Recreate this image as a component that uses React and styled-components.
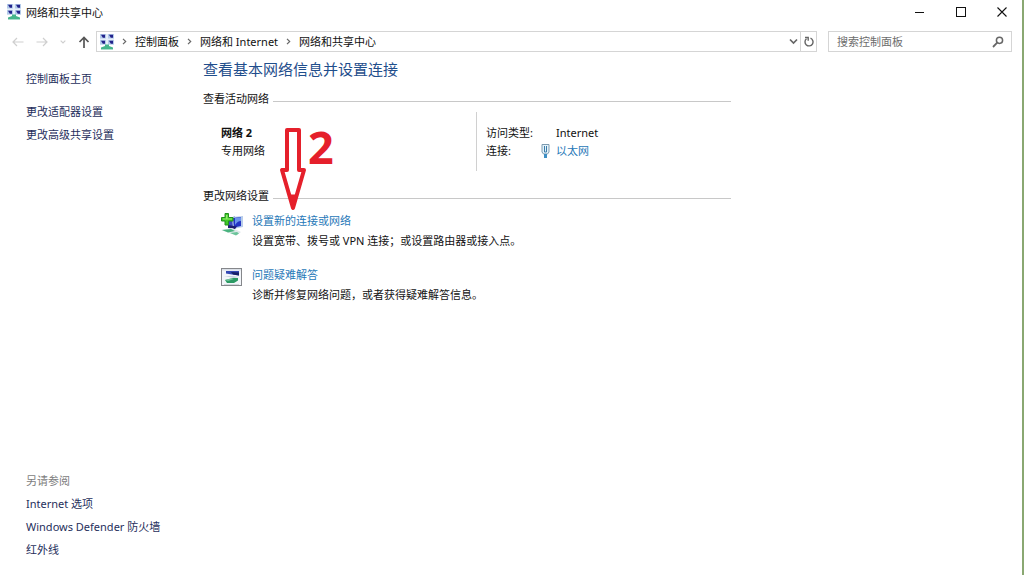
import React, { useState } from 'react'
import styled, { createGlobalStyle } from 'styled-components'

const GlobalStyle = createGlobalStyle`
* {
    box-sizing: border-box;
}
body {
    margin: 0;
    background: #fff;
    color: #111;
    font-family: "Noto Sans", "Noto Sans CJK SC", sans-serif;
    font-size: 11px;
}
button, input {
    font: inherit;
    color: inherit;
}
`

const NetworkIcon = () => (
    <svg width="14" height="16" viewBox="0 0 14 16" aria-hidden="true">
        <rect width="14" height="11" fill="#e6effa" />
        <path d="M0 0h6v4.600H0zM8 0h6v4.600H8zM0 6h6v4.600H0zM8 6h6v4.600H8z" fill="#b4cbea" />
        <path d="M1 .8h4v3H2.800zM9 .8h4v3h-2.200zM1 6.800h4v3H2.800zM9 6.800h4v3h-2.200z" fill="#22228a" />
        <path d="M5 10.500h4V12l4 1.500V15H1v-1.500L5 12z" fill="#45b58c" />
        <path d="M1 15h12v1H1z" fill="#a8dccb" />
    </svg>
)

const SetupIcon = () => (
    <svg width="22" height="23" viewBox="0 0 22 23" aria-hidden="true">
        <path d="M7 5l7-1.500v11L7 15z" fill="#3b4cc0" />
        <path d="M11 4l11-1v11l-10 2z" fill="#b9cdea" />
        <path d="M12 5l8-1v9l-7 1.500z" fill="#2233c4" />
        <path d="M14 5l6-.8V8c-3 0-4 1.500-6 4z" fill="#6d95ea" />
        <path d="M7 12l9 1.500-2 2.500-7-1z" fill="#1d1d70" />
        <path d="M0 17l11-2 9 4-4 3-8-2z" fill="#dfe8ea" />
        <path d="M1 17l9-1 4 2-7 1.500z" fill="#49b37e" />
        <path d="M9 20l7-1 2 1.500-3 2z" fill="#6cc49a" />
        <path d="M4 .5h3.500v4H12V8H7.500v4H4V8H.5V4.500H4z" fill="#3fc928" stroke="#23901d" />
        <path d="M5 2h1.500v3.500H11v1H2v-1h3z" fill="#91ed68" />
    </svg>
)

const TroubleshootIcon = () => (
    <svg width="22" height="20" viewBox="0 0 22 20" aria-hidden="true">
        <rect x=".5" y="1.500" width="20" height="17" fill="#f3f6fa" stroke="#85878b" />
        <path d="M1 2h19v1.500H1z" fill="#dce1e8" />
        <path d="M5 4h13v4.500l-7-1-6-1z" fill="#3348b4" />
        <path d="M10 5l8 .5v3l-6-1z" fill="#171f66" />
        <path d="M3 9h9l6 1-5 1z" fill="#c8d2de" />
        <path d="M4 13l8-2h5v2.500L13 16H6z" fill="#2b9a64" />
        <path d="M4 13l6-1.500 3 .5-6 2z" fill="#72c59b" />
        <path d="M3 17h15v1H3z" fill="#cfd6dc" />
    </svg>
)

const EthernetIcon = () => (
    <svg width="9" height="14" viewBox="0 0 9 14" fill="none" aria-hidden="true">
        <path d="M1 .5h7V8L6.500 10h-4L1 8z" fill="#e4f2fa" stroke="#7c9bb0" />
        <path d="M3.500 2v6h2V2" stroke="#3d7ea9" />
        <path d="M3 10h3v4H3z" fill="#3e8fc4" />
    </svg>
)

const BackArrow = () => (
    <svg width="12" height="10" viewBox="0 0 12 10" fill="none" stroke="currentColor" aria-hidden="true">
        <path d="M11.500 5H1M5 1L1 5l4 4" strokeWidth="1.2" />
    </svg>
)

const ForwardArrow = () => (
    <svg width="12" height="10" viewBox="0 0 12 10" fill="none" stroke="currentColor" aria-hidden="true">
        <path d="M.5 5H11M7 1l4 4-4 4" strokeWidth="1.2" />
    </svg>
)

const UpArrow = () => (
    <svg width="12" height="12" viewBox="0 0 12 12" fill="none" stroke="currentColor" aria-hidden="true">
        <path d="M6 12V1.500M1.500 6L6 1.500 10.500 6" strokeWidth="1.7" />
    </svg>
)

const Chevron = () => (
    <svg width="5" height="7" viewBox="0 0 5 7" fill="none" stroke="#666" aria-hidden="true">
        <path d="M1 .8l2.700 2.700L1 6.200" strokeWidth="1.2" />
    </svg>
)

const DownChevron = ({ size = 9 }) => (
    <svg width={size} height={size} viewBox="0 0 9 9" fill="none" stroke="currentColor" aria-hidden="true">
        <path d="M1 2.500l3.500 3.500L8 2.500" strokeWidth="1.700" />
    </svg>
)

const RefreshIcon = () => (
    <svg width="10" height="11" viewBox="0 0 10 11" fill="none" stroke="currentColor" aria-hidden="true">
        <path d="M6.500 2.200A4 4 0 1 1 2.500 2.800" strokeWidth="1.4" />
        <path d="M1 1.500h3.200v3.200" strokeWidth="1.4" />
    </svg>
)

const SearchIcon = () => (
    <svg width="12" height="12" viewBox="0 0 12 12" fill="none" stroke="currentColor" aria-hidden="true">
        <circle cx="7.500" cy="4.300" r="3.100" strokeWidth="1.500" />
        <path d="M5.200 6.700L1 11" strokeWidth="1.800" />
    </svg>
)

const MinimizeIcon = () => (
    <svg width="10" height="10" viewBox="0 0 10 10" stroke="#111" aria-hidden="true">
        <path d="M0 5.500h9" />
    </svg>
)

const MaximizeIcon = () => (
    <svg width="10" height="10" viewBox="0 0 10 10" fill="none" stroke="#111" aria-hidden="true">
        <rect x=".5" y=".5" width="9" height="9" />
    </svg>
)

const CloseIcon = () => (
    <svg width="10" height="10" viewBox="0 0 10 10" stroke="#111" aria-hidden="true">
        <path d="M.5.5l9 9M9.500.5l-9 9" strokeWidth="1.100" />
    </svg>
)

const ArrowMark = () => (
    <svg width="28" height="86" viewBox="0 0 28 86" fill="none" stroke="#e5202b" aria-hidden="true">
        <path d="M8 3h12v40h5L14 81 3 43h5z" strokeWidth="4" strokeLinejoin="round" />
        <path d="M11 68h6l-3 13z" fill="#e5202b" />
    </svg>
)

const crumbs = ['控制面板', '网络和 Internet', '网络和共享中心']

const tasks = [
    {
        title: '设置新的连接或网络',
        text: '设置宽带、拨号或 VPN 连接；或设置路由器或接入点。',
        icon: <SetupIcon />,
    },
    {
        title: '问题疑难解答',
        text: '诊断并修复网络问题，或者获得疑难解答信息。',
        icon: <TroubleshootIcon />,
    },
]

const App = () => {
    const [term, setTerm] = useState('')

    return (
        <Window lang="zh-CN">
            <GlobalStyle />
            <TitleBar>
                <NetworkIcon />
                <WindowTitle>网络和共享中心</WindowTitle>
                <WindowButton aria-label="最小化"><MinimizeIcon /></WindowButton>
                <WindowButton aria-label="最大化"><MaximizeIcon /></WindowButton>
                <WindowButton aria-label="关闭"><CloseIcon /></WindowButton>
            </TitleBar>
            <Toolbar>
                <History>
                    <IconButton $faded aria-label="后退"><BackArrow /></IconButton>
                    <IconButton $faded aria-label="前进"><ForwardArrow /></IconButton>
                    <IconButton $faded aria-label="最近位置"><DownChevron size={6} /></IconButton>
                    <IconButton aria-label="向上"><UpArrow /></IconButton>
                </History>
                <AddressBar>
                    <Crumbs aria-label="地址">
                        <NetworkIcon />
                        {crumbs.map((name) => (
                            <React.Fragment key={name}>
                                <Chevron />
                                <Crumb href="#">{name}</Crumb>
                            </React.Fragment>
                        ))}
                    </Crumbs>
                    <AddressButton aria-label="展开"><DownChevron /></AddressButton>
                    <AddressButton $divided aria-label="刷新"><RefreshIcon /></AddressButton>
                </AddressBar>
                <SearchBox>
                    <input
                        aria-label="搜索控制面板"
                        placeholder="搜索控制面板"
                        value={term}
                        onChange={(e) => setTerm(e.target.value)}
                    />
                    <SearchIcon />
                </SearchBox>
            </Toolbar>
            <Body>
                <Sidebar>
                    <SideLinks>
                        <SideLink $first href="#">控制面板主页</SideLink>
                        <SideLink href="#">更改适配器设置</SideLink>
                        <SideLink href="#">更改高级共享设置</SideLink>
                    </SideLinks>
                    <SideLinks>
                        <SeeAlsoTitle>另请参阅</SeeAlsoTitle>
                        <SideLink href="#">Internet 选项</SideLink>
                        <SideLink href="#">Windows Defender 防火墙</SideLink>
                        <SideLink href="#">红外线</SideLink>
                    </SideLinks>
                </Sidebar>
                <Main>
                    <Heading>查看基本网络信息并设置连接</Heading>
                    <SectionTitle>查看活动网络</SectionTitle>
                    <ActiveNetwork>
                        <div>
                            <strong>网络 2</strong>
                            <p>专用网络</p>
                        </div>
                        <Details>
                            <dt>访问类型:</dt>
                            <dd>Internet</dd>
                            <dt>连接:</dt>
                            <dd>
                                <EthernetIcon />
                                <TextLink href="#">以太网</TextLink>
                            </dd>
                        </Details>
                    </ActiveNetwork>
                    <SectionTitle>更改网络设置</SectionTitle>
                    <TaskList>
                        {tasks.map((task) => (
                            <Task key={task.title}>
                                {task.icon}
                                <div>
                                    <TextLink href="#">{task.title}</TextLink>
                                    <p>{task.text}</p>
                                </div>
                            </Task>
                        ))}
                    </TaskList>
                    <Step>
                        <ArrowMark />
                        <span>2</span>
                    </Step>
                </Main>
            </Body>
        </Window>
    )
}

export default App

const Window = styled.div`
min-height: 100vh;
display: flex;
flex-direction: column;
border-right: 2px solid #8aa872;
`
const TitleBar = styled.header`
height: 24px;
padding-left: 7px;
display: flex;
align-items: center;
`
const WindowTitle = styled.h1`
flex: 1;
margin: 0 0 0 5px;
font-size: 11px;
font-weight: 400;
`
const WindowButton = styled.button`
width: 41px;
height: 24px;
padding: 0;
display: flex;
align-items: center;
justify-content: center;
border: none;
background: none;
&:hover {
    background: #e5e5e5;
}
`
const Toolbar = styled.div`
padding: 7px 10px 0 12px;
display: flex;
align-items: center;
`
const History = styled.div`
width: 84px;
display: flex;
align-items: center;
gap: 12px;
`
const IconButton = styled.button`
padding: 0;
display: flex;
border: none;
background: none;
color: ${(props) => (props.$faded ? '#cfcfcf' : '#555')};
`
const AddressBar = styled.div`
flex: 1;
height: 21px;
margin-right: 11px;
display: flex;
border: 1px solid #d5d5d5;
`
const Crumbs = styled.nav`
flex: 1;
padding-left: 3px;
display: flex;
align-items: center;
gap: 8px;
line-height: 16px;
`
const Crumb = styled.a`
color: #111;
text-decoration: none;
`
const AddressButton = styled.button`
width: ${(props) => (props.$divided ? '16px' : '13px')};
padding: 0;
display: flex;
align-items: center;
justify-content: center;
border: none;
border-left: ${(props) => (props.$divided ? '1px solid #d5d5d5' : 'none')};
background: none;
color: #666;
`
const SearchBox = styled.label`
width: 184px;
height: 21px;
padding: 0 7px 0 8px;
display: flex;
align-items: center;
border: 1px solid #d5d5d5;
color: #666;
input {
    flex: 1;
    min-width: 0;
    padding: 0;
    border: none;
    outline: none;
    background: none;
}
input::placeholder {
    color: #6d6d6d;
}
`
const Body = styled.div`
flex: 1;
display: flex;
`
const Sidebar = styled.aside`
width: 203px;
flex-shrink: 0;
padding: 15px 0 14px 26px;
display: flex;
flex-direction: column;
justify-content: space-between;
line-height: 23px;
`
const SideLinks = styled.nav`
display: flex;
flex-direction: column;
`
const SeeAlsoTitle = styled.span`
color: #7d7d7d;
`
const SideLink = styled.a`
margin-bottom: ${(props) => (props.$first ? '10px' : '0')};
color: #1f2f5c;
text-decoration: none;
&:hover {
    text-decoration: underline;
}
`
const Main = styled.main`
position: relative;
flex: 1;
max-width: 528px;
padding-top: 7px;
p {
    margin: 0;
}
`
const Heading = styled.h2`
margin: 0 0 12px;
color: #1f4e8c;
font-size: 15px;
font-weight: 400;
line-height: 20px;
`
const SectionTitle = styled.h3`
margin: 0;
display: flex;
align-items: center;
gap: 4px;
font-size: 11px;
font-weight: 400;
line-height: 16px;
&::after {
    content: "";
    flex: 1;
    margin-top: 5px;
    border-top: 1px solid #c8c8c8;
}
`
const ActiveNetwork = styled.div`
margin: 5px 0 17px;
padding-left: 18px;
display: grid;
grid-template-columns: 1fr 1fr;
line-height: 18px;
> div {
    padding: 12px 0 11px;
}
`
const Details = styled.dl`
margin: 0;
padding: 12px 0 11px 9px;
display: grid;
grid-template-columns: 54px 1fr;
border-left: 1px solid #d0d0d0;
dd {
    margin: 0;
    padding-left: 16px;
    display: flex;
    align-items: center;
    gap: 6px;
}
dd svg {
    margin-left: -15px;
}
`
const TextLink = styled.a`
color: #1f78b8;
text-decoration: none;
&:hover {
    text-decoration: underline;
}
`
const TaskList = styled.ul`
margin: 7px 0 0;
padding: 0 0 0 18px;
display: flex;
flex-direction: column;
gap: 14px;
list-style: none;
line-height: 20px;
`
const Task = styled.li`
display: flex;
gap: 9px;
svg {
    flex-shrink: 0;
    margin-top: 2px;
}
`
// step marker drawn over the page, pointing at the first task
const Step = styled.div`
position: absolute;
left: 76px;
top: 75px;
display: flex;
gap: 1px;
pointer-events: none;
span {
    color: #e5202b;
    font-size: 45px;
    font-weight: 700;
    line-height: 40px;
}
`
